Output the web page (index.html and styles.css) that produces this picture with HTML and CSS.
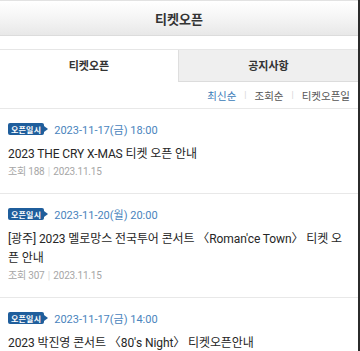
FILE: index.html
```html
<!doctype html>
<html>
<head>
    <meta charset="utf-8">
    <title>티켓오픈</title>
    <link rel="stylesheet" href="styles.css">
</head>
<body>
<div class="page">
    <header class="topbar">
        <h1>티켓오픈</h1>
    </header>

    <nav class="tabs">
        <a class="tab active">티켓오픈</a>
        <a class="tab">공지사항</a>
    </nav>

    <div class="sort-row">
        <a class="sort active">최신순</a>
        <span class="sep">|</span>
        <a class="sort">조회순</a>
        <span class="sep">|</span>
        <a class="sort">티켓오픈일</a>
    </div>

    <ul class="notice-list">
        <li class="notice">
            <div class="open-row">
                <span class="badge">오픈일시</span>
                <span class="open-date">2023-11-17(금) 18:00</span>
            </div>
            <p class="notice-title">2023 THE CRY X-MAS 티켓 오픈 안내</p>
            <p class="notice-meta">조회 188 <span class="bar">|</span> 2023.11.15</p>
        </li>
        <li class="notice">
            <div class="open-row">
                <span class="badge">오픈일시</span>
                <span class="open-date">2023-11-20(월) 20:00</span>
            </div>
            <p class="notice-title">[광주] 2023 멜로망스 전국투어 콘서트 〈Roman'ce Town〉 티켓 오픈 안내</p>
            <p class="notice-meta">조회 307 <span class="bar">|</span> 2023.11.15</p>
        </li>
        <li class="notice">
            <div class="open-row">
                <span class="badge">오픈일시</span>
                <span class="open-date">2023-11-17(금) 14:00</span>
            </div>
            <p class="notice-title">2023 박진영 콘서트 〈80's Night〉 티켓오픈안내</p>
            <p class="notice-meta">조회 95 <span class="bar">|</span> 2023.11.14</p>
        </li>
    </ul>
</div>
</body>
</html>
```

FILE: styles.css
```css
html, body {
    margin: 0;
    padding: 0;
    background-color: #fff;
}

body {
    font-family: Roboto, "Noto Sans CJK KR", "Noto Sans", sans-serif;
    color: #333;
}

.page {
    width: 360px;
    min-height: 351px;
    box-sizing: border-box;
    border-right: 2px solid #2b2b2b;
}

.topbar {
    height: 36px;
    box-sizing: border-box;
    border-top: 1px solid #e2e2e2;
    border-bottom: 1px solid #dcdcdc;
    background: linear-gradient(to bottom, #ffffff 0%, #f6f6f6 45%, #e8e8e8 100%);
    display: flex;
    align-items: center;
    justify-content: center;
}
.topbar h1 {
    margin: 0;
    font-size: 13px;
    font-weight: 700;
    color: #333;
}

.tabs {
    margin-top: 13px;
    height: 33px;
    display: flex;
    box-sizing: border-box;
    border-top: 1px solid #e6e6e6;
}
.tab {
    flex: 1;
    display: flex;
    align-items: center;
    justify-content: center;
    padding-bottom: 2px;
    font-size: 11px;
    font-weight: 700;
    color: #333;
    background-color: #efefef;
    border-left: 1px solid #dedede;
    border-bottom: 1px solid #dcdcdc;
}
.tab.active {
    flex: 0 0 178px;
    background-color: #fff;
    border-left: none;
    border-bottom: none;
}

.sort-row {
    height: 26px;
    display: flex;
    align-items: center;
    justify-content: flex-end;
    gap: 8px;
    padding-right: 8px;
    font-size: 10.5px;
    color: #555;
}
.sort.active {
    color: #3b7bb8;
}
.sep {
    color: #d5d5d5;
    font-size: 9px;
}

.notice-list {
    list-style: none;
    margin: 0;
    padding: 0;
}
.notice {
    border-top: 1px solid #e8e8e8;
    padding: 12px 10px 14px 8px;
}

.open-row {
    height: 16px;
    display: flex;
    align-items: center;
    gap: 10px;
}
.badge {
    position: relative;
    display: inline-flex;
    align-items: center;
    height: 12px;
    padding: 0 3px;
    background-color: #1f5e9c;
    border-radius: 2px;
    color: #fff;
    font-size: 8px;
    font-weight: 700;
    letter-spacing: 0.2px;
}
.badge:after {
    content: "";
    position: absolute;
    right: -4px;
    top: 3px;
    border-top: 3px solid transparent;
    border-bottom: 3px solid transparent;
    border-left: 4px solid #1f5e9c;
}
.open-date {
    font-size: 11px;
    color: #4a84bd;
}

.notice-title {
    margin: 8px 0 0 0;
    font-size: 12px;
    line-height: 19px;
    letter-spacing: -0.1px;
    color: #262626;
}
.notice-meta {
    margin: 1px 0 0 0;
    font-size: 10px;
    line-height: 14px;
    letter-spacing: -0.2px;
    color: #a6a6a6;
}
.notice-meta .bar {
    color: #d8d8d8;
    margin: 0 1px;
}
```
